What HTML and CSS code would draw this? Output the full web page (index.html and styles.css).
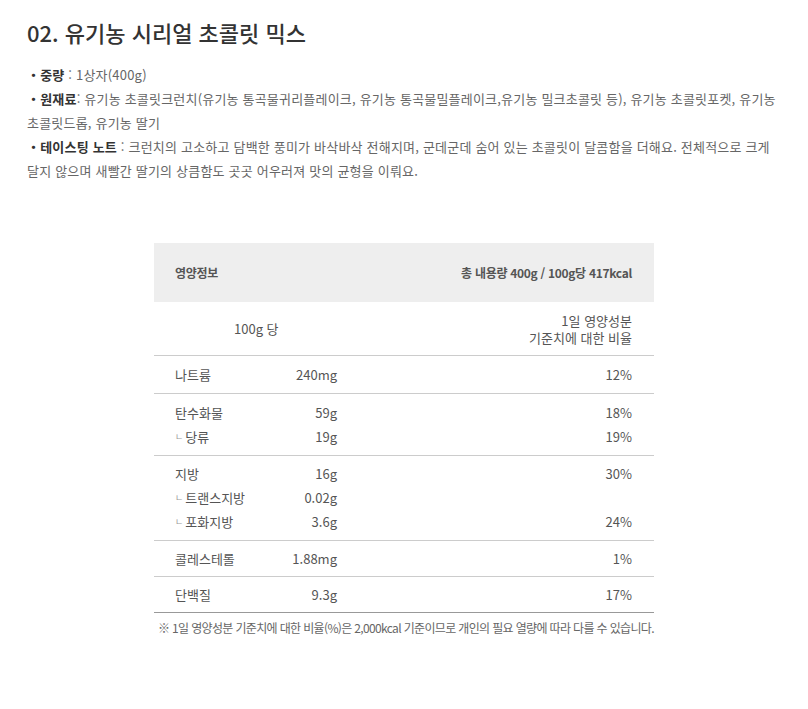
FILE: index.html
```html
<!DOCTYPE html>
<html lang="ko">
<head>
<meta charset="utf-8">
<link rel="stylesheet" href="styles.css">
</head>
<body>
<div class="page">
  <h2 class="title">02. 유기농 시리얼 초콜릿 믹스</h2>
  <div class="desc">
    <p><b>・중량</b> : 1상자(400g)</p>
    <p><b>・원재료</b>: 유기농 초콜릿크런치(유기농 통곡물귀리플레이크, 유기농 통곡물밀플레이크,유기농 밀크초콜릿 등), 유기농 초콜릿포켓, 유기농 초콜릿드롭, 유기농 딸기</p>
    <p><b>・테이스팅 노트</b> : 크런치의 고소하고 담백한 풍미가 바삭바삭 전해지며, 군데군데 숨어 있는 초콜릿이 달콤함을 더해요. 전체적으로 크게 달지 않으며 새빨간 딸기의 상큼함도 곳곳 어우러져 맛의 균형을 이뤄요.</p>
  </div>
  <div class="nutri">
    <div class="head">
      <span>영양정보</span>
      <span>총 내용량 400g / 100g당 417kcal</span>
    </div>
    <div class="sub">
      <span class="per">100g 당</span>
      <span class="ratio">1일 영양성분<br>기준치에 대한 비율</span>
    </div>
    <div class="group g1">
      <div class="row"><span class="name">나트륨</span><span class="amt">240mg</span><span class="pct">12%</span></div>
    </div>
    <div class="group g2">
      <div class="row"><span class="name">탄수화물</span><span class="amt">59g</span><span class="pct">18%</span></div>
      <div class="row"><span class="name"><i>ㄴ</i>당류</span><span class="amt">19g</span><span class="pct">19%</span></div>
    </div>
    <div class="group">
      <div class="row"><span class="name">지방</span><span class="amt">16g</span><span class="pct">30%</span></div>
      <div class="row"><span class="name"><i>ㄴ</i>트랜스지방</span><span class="amt">0.02g</span><span class="pct"></span></div>
      <div class="row"><span class="name"><i>ㄴ</i>포화지방</span><span class="amt">3.6g</span><span class="pct">24%</span></div>
    </div>
    <div class="group tight">
      <div class="row"><span class="name">콜레스테롤</span><span class="amt">1.88mg</span><span class="pct">1%</span></div>
    </div>
    <div class="group tight last">
      <div class="row"><span class="name">단백질</span><span class="amt">9.3g</span><span class="pct">17%</span></div>
    </div>
    <p class="note">※ 1일 영양성분 기준치에 대한 비율(%)은 2,000kcal 기준이므로 개인의 필요 열량에 따라 다를 수 있습니다.</p>
  </div>
</div>
</body>
</html>
```
FILE: styles.css
```css
html, body {
  margin: 0;
  padding: 0;
  background: #fff;
}
body {
  font-family: "Noto Sans CJK KR", "Noto Sans", sans-serif;
  color: #666;
}
.page {
  padding: 16px 27px 0 27px;
}
.title {
  margin: 0;
  font-size: 22px;
  font-weight: 500;
  line-height: 32px;
  color: #333;
}
.desc {
  margin: 15px -4px 0 0;
  font-size: 13px;
  line-height: 24px;
  letter-spacing: 0.2px;
  word-break: keep-all;
}
.desc p {
  margin: 0;
}
.desc b {
  color: #333;
  font-weight: 700;
}
.nutri {
  width: 500px;
  margin: 60px auto 0;
  font-size: 13px;
  color: #555;
}
.head {
  display: flex;
  justify-content: space-between;
  align-items: center;
  height: 59px;
  padding: 0 22px 0 21px;
  background: #eee;
  font-size: 12px;
  font-weight: 700;
  color: #555;
  letter-spacing: -0.3px;
}
.sub {
  display: flex;
  justify-content: space-between;
  align-items: center;
  height: 53px;
  padding: 0 22px 0 80px;
  border-bottom: 1px solid #ccc;
  line-height: 17px;
}
.ratio {
  text-align: right;
}
.group {
  padding: 6px 0;
  border-bottom: 1px solid #ccc;
}
.group.g1,
.group.g2 {
  padding: 7px 0 6px;
}
.group.tight {
  padding: 6px 0 5px;
}
.group.last {
  border-bottom: 1px solid #999;
}
.row {
  display: grid;
  grid-template-columns: 110px 52px 1fr;
  padding: 0 22px 0 21px;
  line-height: 24px;
}
.name i {
  font-style: normal;
  font-size: 9px;
  color: #999;
  margin-right: 2px;
  vertical-align: 2px;
}
.amt, .pct {
  text-align: right;
}
.note {
  margin: 5px 0 0 4px;
  font-size: 12px;
  line-height: 20px;
  color: #666;
  letter-spacing: -0.65px;
  white-space: nowrap;
}
```
